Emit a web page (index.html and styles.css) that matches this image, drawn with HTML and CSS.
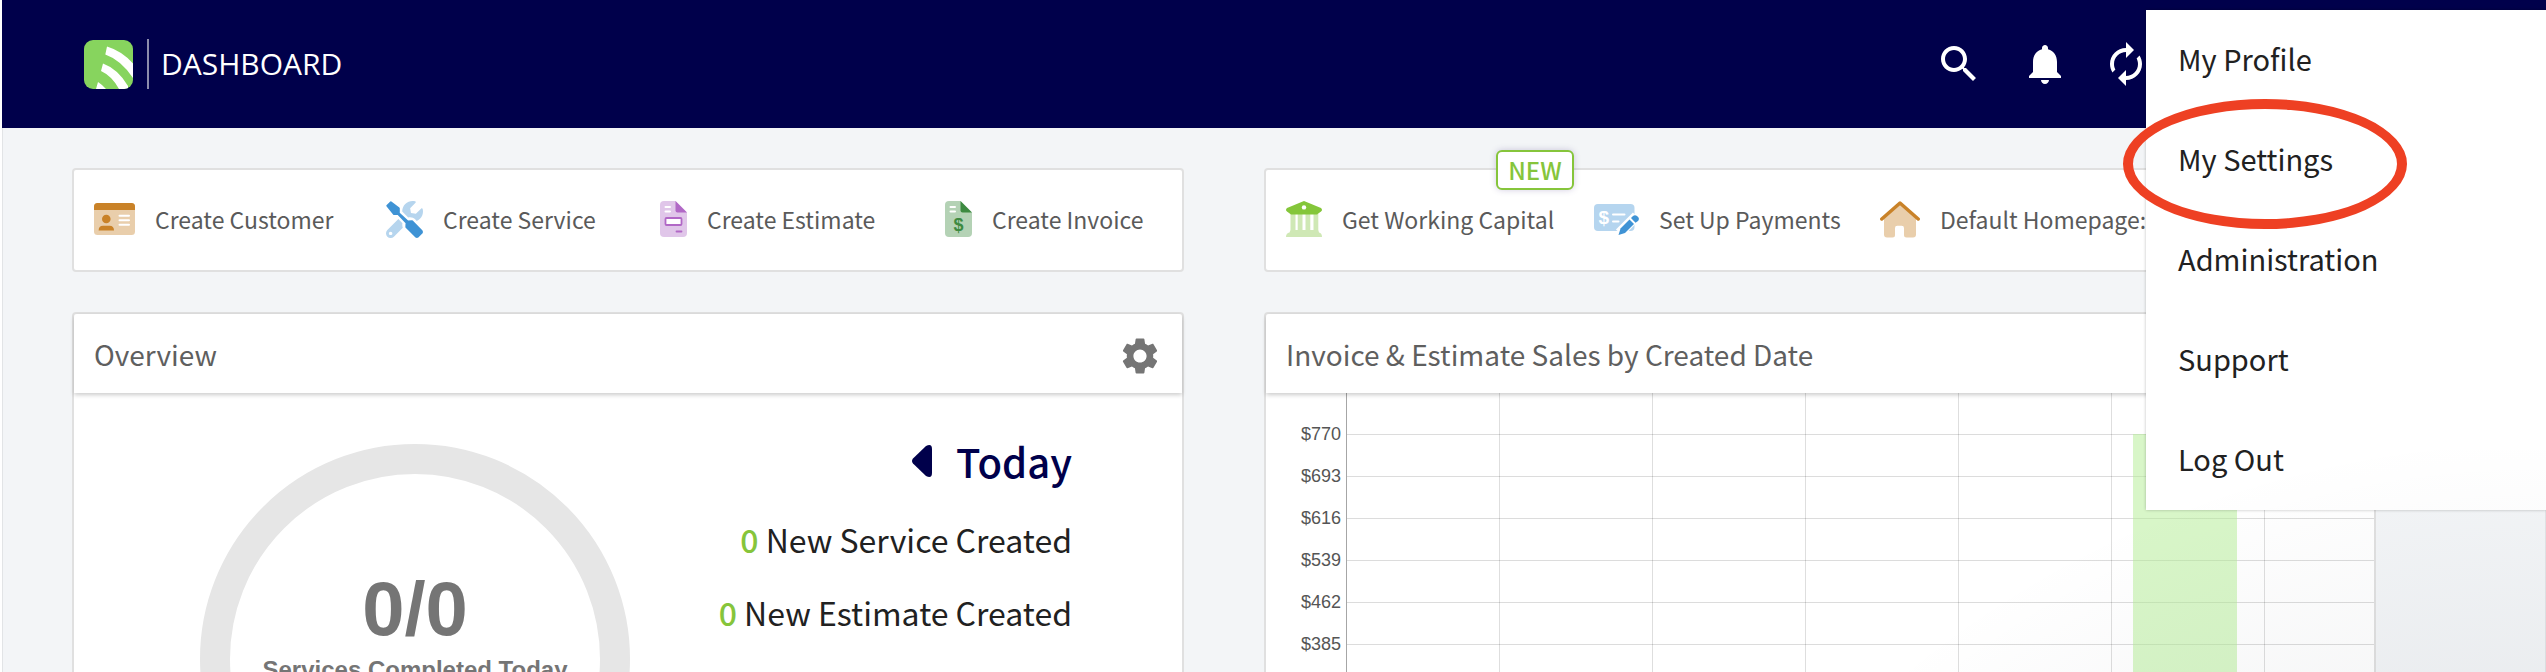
FILE: index.html
```html
<!DOCTYPE html>
<html lang="en">

<head>
  <meta charset="UTF-8">
  <meta name="viewport" content="width=device-width, initial-scale=1.0">
  <title>Dashboard</title>
  <link rel="stylesheet" href="styles.css">
</head>

<body>
  <header class="topbar">
    <a class="brand" href="#" aria-label="Home">
      <svg class="logo" viewBox="0 0 49 49">
        <defs>
          <clipPath id="logoClip"><rect width="49" height="49" rx="9" /></clipPath>
        </defs>
        <g clip-path="url(#logoClip)">
          <rect width="49" height="49" fill="#87d45e" />
          <path fill="#fff" d="M23 6.5Q38 11 49 23.5V38Q37 20 21.3 14.5zM19 23.5Q34 29 44 46V49H35Q28 36 17 31zM14 42Q18 44.500 22 49H12z" />
        </g>
      </svg>
      <h1 class="page-name">DASHBOARD</h1>
    </a>
    <div class="topbar-icons">
      <button type="button" class="icon-button" aria-label="Search">
        <svg viewBox="0 0 24 24"><path d="M15.500 14h-.79l-.28-.27C15.410 12.590 16 11.110 16 9.500 16 5.910 13.090 3 9.500 3S3 5.910 3 9.500 5.910 16 9.500 16c1.610 0 3.090-.59 4.230-1.570l.27.28v.79l5 4.990L20.490 19l-4.990-5zm-6 0C7.010 14 5 11.990 5 9.500S7.010 5 9.500 5 14 7.010 14 9.500 11.990 14 9.500 14z" /></svg>
      </button>
      <div class="topbar-status">
        <button type="button" class="icon-button" aria-label="Notifications">
          <svg viewBox="0 0 24 24"><path d="M12 22c1.100 0 2-.9 2-2h-4c0 1.100.89 2 2 2zm6-6v-5c0-3.070-1.640-5.640-4.500-6.320V4c0-.83-.67-1.500-1.500-1.500s-1.500.67-1.500 1.500v.68C7.630 5.360 6 7.920 6 11v5l-2 2v1h16v-1l-2-2z" /></svg>
        </button>
        <button type="button" class="icon-button" aria-label="Refresh">
          <svg viewBox="0 0 24 24"><path d="M12 6v3l4-4-4-4v3c-4.420 0-8 3.580-8 8 0 1.570.46 3.030 1.240 4.260L6.700 14.800c-.45-.83-.7-1.790-.7-2.800 0-3.310 2.690-6 6-6zm6.760 1.740L17.300 9.200c.44.84.7 1.790.7 2.800 0 3.310-2.690 6-6 6v-3l-4 4 4 4v-3c4.420 0 8-3.580 8-8 0-1.570-.46-3.030-1.240-4.260z" /></svg>
        </button>
      </div>
    </div>
  </header>

  <nav class="user-menu">
    <a href="#">My Profile</a>
    <a href="#" class="marked">My Settings</a>
    <a href="#">Administration</a>
    <a href="#">Support</a>
    <a href="#">Log Out</a>
  </nav>

  <main class="dashboard">
    <div class="card actions actions-create">
      <a class="action" href="#">
        <svg width="41" height="32" viewBox="0 0 41 32">
          <rect width="41" height="32" rx="3.500" fill="#e9ceab" />
          <path fill="#c98228" d="M0 7V3.500Q0 0 3.500 0h34Q41 0 41 3.500V7z" />
          <circle cx="12.300" cy="16" r="4.300" fill="#c98228" />
          <path fill="#c98228" d="M4.600 27.500Q4.600 22.700 9 22.700h6.600Q20 22.700 20 27.500z" />
          <path stroke="#fff" stroke-width="2" stroke-linecap="round" d="M25.500 12.700H35M25.500 17.300H35M25.500 21.800H35" />
        </svg>
        Create Customer
      </a>
      <a class="action" href="#">
        <svg width="37" height="37" viewBox="0 0 512 512">
          <path fill="#b6d5ee" d="M331.700 225c28.300 0 54.900 11 74.900 31l19.400 19.400c15.800-6.900 30.800-16.500 43.800-29.500 37.100-37.100 49.700-89.300 37.900-136.700-2.200-9-13.500-12.100-20.100-5.500l-74.400 74.400-67.900-11.300L334 98.900l74.400-74.400c6.600-6.600 3.400-17.900-5.700-20.200-47.400-11.700-99.600.9-136.600 37.900-28.500 28.500-41.900 66.100-41.200 103.600l82.100 82.100c8.100-1.900 16.500-2.900 24.700-2.900zm-103.900 82l-56.700-56.700L18.700 402.800c-25 25-25 65.500 0 90.500s65.500 25 90.500 0l123.600-123.600c-7.600-19.900-9.900-41.600-5-62.700zM64 472c-13.200 0-24-10.800-24-24 0-13.300 10.700-24 24-24s24 10.700 24 24c0 13.200-10.700 24-24 24z" />
          <path fill="#3f93d5" stroke="#3f93d5" stroke-width="30" stroke-linejoin="round" d="M66 20L176 102V170L300 285 360 282 492 415Q500 428 492 440L440 492Q428 500 415 492L283 360 285 300 170 180H112L20 66z" />
        </svg>
        Create Service
      </a>
      <a class="action" href="#">
        <svg width="27" height="36" viewBox="0 0 27 36">
          <path fill="#e0c6e9" d="M4 0H15.500L27 11.500V32Q27 36 23 36H4Q0 36 0 32V4Q0 0 4 0z" />
          <path fill="#b168c6" d="M15.500 0L27 11.500H17.500Q15.500 11.500 15.500 9.500z" />
          <path stroke="#fff" stroke-width="2" stroke-linecap="round" d="M5.500 6H10M5.500 10.500H10" />
          <rect x="5.500" y="17" width="16" height="7" rx="1" fill="#fff" stroke="#b168c6" stroke-width="1.800" />
          <path stroke="#b168c6" stroke-width="1.800" stroke-linecap="round" d="M16.500 30.500H21.500" />
        </svg>
        Create Estimate
      </a>
      <a class="action" href="#">
        <svg width="27" height="36" viewBox="0 0 27 36">
          <path fill="#b4d2b5" d="M4 0H15.500L27 11.500V32Q27 36 23 36H4Q0 36 0 32V4Q0 0 4 0z" />
          <path fill="#3d8a41" d="M15.500 0L27 11.500H17.500Q15.500 11.500 15.500 9.500z" />
          <path stroke="#fff" stroke-width="2" stroke-linecap="round" d="M5.500 6H10M5.500 10.500H10" />
          <text class="icon-text" x="13.500" y="30" font-size="18" fill="#3d8a41">$</text>
        </svg>
        Create Invoice
      </a>
    </div>

    <div class="card actions actions-account">
      <a class="action" href="#">
        <svg width="36" height="36" viewBox="0 0 36 36">
          <path fill="#cfe8b5" d="M4.500 13H9.500V29H11.700V13H16.500V29H19.500V13H24.300V29H27.500V13H32.300V29L33 31.500Q36 32 36 36H0Q0 32 3.500 31.500L4.500 29z" />
          <path fill="#84c63a" d="M18 0L35 7Q37 9 35 10.500L31 13.500H5L1 10.500Q-1 9 1 7z" />
          <circle cx="18" cy="6.400" r="2.200" fill="#fff" />
        </svg>
        Get Working Capital
        <span class="badge">NEW</span>
      </a>
      <a class="action" href="#">
        <svg width="45" height="31" viewBox="0 0 45 31">
          <rect width="40.500" height="27" rx="4" fill="#b5d5ef" />
          <text class="icon-text" x="9.700" y="20" font-size="19" fill="#fff">$</text>
          <path stroke="#fff" stroke-width="2" stroke-linecap="round" d="M19 10.500H30.500M19 17.500H24.500" />
          <path stroke="#fff" stroke-width="10" d="M42.500 12L25.500 29" />
          <path fill="#3f93d5" d="M24.500 31L26.500 24.500 35.500 15.500 40 20 31 29z" />
          <path fill="#3f93d5" d="M37 14L39 12Q41 10.300 43 12L44.300 13.300Q45.600 15 44 17L41.500 18.700z" />
        </svg>
        Set Up Payments
      </a>
      <a class="action" href="#">
        <svg width="40" height="37" viewBox="0 0 40 37">
          <path fill="#e9ceab" d="M20 3L36 17V33.500Q36 36.500 33 36.500H26.500Q24 36.500 24 34V27Q24 24.700 21.700 24.700H17.300Q15 24.700 15 27V34Q15 36.500 12.500 36.500H7Q4 36.500 4 33.500V17z" />
          <path fill="none" stroke="#c98228" stroke-width="3.500" stroke-linecap="round" stroke-linejoin="round" d="M1.800 18L20 2 38.200 18" />
        </svg>
        Default Homepage:
      </a>
    </div>

    <section class="card">
      <div class="card-header">
        <h2>Overview</h2>
        <button type="button" class="gear-button" aria-label="Overview settings">
          <svg viewBox="0 0 24 24"><path d="M19.140 12.940c.04-.3.060-.61.060-.94 0-.32-.020-.64-.070-.94l2.030-1.580c.18-.14.23-.41.12-.61l-1.920-3.320c-.12-.22-.37-.29-.59-.22l-2.390.96c-.5-.38-1.030-.7-1.620-.94l-.36-2.540c-.04-.24-.24-.41-.48-.41h-3.840c-.24 0-.43.17-.47.41l-.36 2.540c-.59.24-1.130.57-1.620.94l-2.390-.96c-.22-.08-.47 0-.59.22L2.740 8.870c-.12.21-.08.47.12.61l2.030 1.580c-.05.3-.09.63-.09.94s.020.64.070.94l-2.030 1.580c-.18.14-.23.41-.12.61l1.920 3.320c.12.22.37.29.59.22l2.390-.96c.5.38 1.030.7 1.620.94l.36 2.540c.05.24.24.41.48.41h3.840c.24 0 .44-.17.47-.41l.36-2.540c.59-.24 1.130-.56 1.620-.94l2.390.96c.22.08.47 0 .59-.22l1.920-3.320c.12-.22.070-.47-.12-.61l-2.010-1.580zM12 15.600c-1.980 0-3.600-1.620-3.600-3.600s1.620-3.600 3.600-3.600 3.600 1.620 3.600 3.600-1.620 3.600-3.600 3.600z" /></svg>
        </button>
      </div>
      <div class="overview">
        <div class="donut">
          <strong class="donut-value">0/0</strong>
          <span class="donut-label">Services Completed Today</span>
        </div>
        <div class="summary">
          <div class="summary-day">
            <button type="button" class="prev-day" aria-label="Previous day">
              <svg viewBox="0 0 20 32"><path d="M1 13.500L14 1Q20-2 20 4V28Q20 34 14 31L1 18.500Q-1 16 1 13.500z" /></svg>
            </button>
            <h3>Today</h3>
          </div>
          <p><span class="count">0</span> New Service Created</p>
          <p><span class="count">0</span> New Estimate Created</p>
        </div>
      </div>
    </section>

    <section class="card">
      <div class="card-header">
        <h2>Invoice &amp; Estimate Sales by Created Date</h2>
      </div>
      <div class="chart">
        <div class="chart-labels">
          <span>$770</span>
          <span>$693</span>
          <span>$616</span>
          <span>$539</span>
          <span>$462</span>
          <span>$385</span>
        </div>
        <div class="chart-plot">
          <div class="chart-col"></div>
          <div class="chart-col"></div>
          <div class="chart-col"></div>
          <div class="chart-col"></div>
          <div class="chart-col"></div>
          <div class="chart-col"><div class="bar"></div></div>
          <div class="chart-col"></div>
        </div>
      </div>
    </section>
  </main>

  <div class="corner-shade"></div>
</body>

</html>
```

FILE: styles.css
```css
*,
*::after {
  box-sizing: border-box;
}

body {
  margin: 0;
  padding-left: 2px;
  height: 100vh;
  overflow: hidden;
  position: relative;
  display: flex;
  flex-direction: column;
  font-family: "Noto Sans CJK SC", "Noto Sans", sans-serif;
  font-size: 23px;
  color: #212121;
  background-color: #fff;
}

h1,
h2,
h3,
p {
  margin: 0;
  font-weight: 400;
}

a {
  color: inherit;
  text-decoration: none;
}

button {
  display: block;
  padding: 0;
  border: none;
  background: none;
  cursor: pointer;
}

svg {
  display: block;
  flex: none;
}

.topbar {
  flex: none;
  height: 128px;
  padding: 0 396px 0 82px;
  display: flex;
  justify-content: space-between;
  align-items: center;
  background-color: #00004b;
  color: #fff;
}

.brand {
  display: flex;
  align-items: center;
  gap: 14px;
}

.logo {
  width: 49px;
  height: 49px;
}

.page-name {
  padding-left: 12px;
  border-left: 2px solid #8c8cac;
  font-family: "Open Sans", sans-serif;
  font-size: 30px;
  line-height: 50px;
}

.topbar-icons {
  display: flex;
  gap: 38px;
}

.topbar-status {
  display: flex;
  gap: 33px;
}

.icon-button svg {
  width: 48px;
  height: 48px;
  fill: #fff;
}

.user-menu {
  position: absolute;
  top: 10px;
  right: 0;
  z-index: 5;
  width: 400px;
  background-color: #fff;
  box-shadow: 0 0 3px rgba(0, 0, 0, 0.25);
}

.user-menu a {
  display: block;
  position: relative;
  height: 100px;
  padding: 0 32px;
  font-size: 29px;
  line-height: 96px;
}

.marked::after {
  content: "";
  position: absolute;
  top: -11px;
  left: -23px;
  width: 284px;
  height: 130px;
  border: 10px solid #ee4023;
  border-radius: 50%;
}

.dashboard {
  flex: 1;
  min-height: 0;
  overflow: hidden;
  padding: 40px 169px 0 69px;
  display: grid;
  grid-template-columns: 1fr 1fr;
  grid-template-rows: 104px auto;
  gap: 40px 80px;
  background-color: #f3f5f7;
  border-left: 1px solid #e2e4e6;
  border-right: 1px solid #e2e4e6;
}

.card {
  min-width: 0;
  background-color: #fff;
  border: 2px solid #e0e0e0;
  border-radius: 4px;
}

.actions {
  display: grid;
  align-items: center;
  padding: 0 20px;
}

.actions-create {
  grid-template-columns: 292fr 274fr 285fr 217fr;
}

.actions-account {
  grid-template-columns: 308fr 286fr 474fr;
}

.action {
  position: relative;
  display: flex;
  align-items: center;
  gap: 20px;
  padding-bottom: 2px;
  line-height: 36px;
  color: #5a5a5a;
  white-space: nowrap;
}

.icon-text {
  font-family: "Liberation Sans", Arial, sans-serif;
  font-weight: 700;
  text-anchor: middle;
}

.badge {
  position: absolute;
  top: -51px;
  left: 210px;
  width: 78px;
  border: 2px solid #86c53b;
  border-radius: 6px;
  background-color: #fff;
  box-shadow: 0 0 6px rgba(80, 60, 140, 0.25);
  color: #86c53b;
  font-size: 24px;
  font-weight: 500;
  line-height: 36px;
  text-align: center;
}

.card-header {
  position: relative;
  z-index: 1;
  height: 79px;
  padding: 4px 20px 0;
  display: flex;
  justify-content: space-between;
  align-items: center;
  background-color: #fff;
  border-radius: 4px 4px 0 0;
  box-shadow: 0 2px 4px rgba(0, 0, 0, 0.2);
}

.card-header h2 {
  padding-bottom: 4px;
  font-size: 28px;
  line-height: 40px;
  color: #5f5f5f;
}

.gear-button svg {
  width: 44px;
  height: 44px;
  fill: #757575;
}

.overview {
  display: flex;
  justify-content: space-between;
  align-items: flex-start;
  padding: 40px 110px 40px 126px;
}

.donut {
  width: 430px;
  height: 430px;
  margin-top: 11px;
  padding-top: 90px;
  border: 30px solid #e6e6e6;
  border-radius: 50%;
  text-align: center;
  color: #757575;
  font-family: "Liberation Sans", Arial, sans-serif;
  font-weight: 700;
}

.donut-value {
  display: block;
  font-size: 76px;
  line-height: 90px;
}

.donut-label {
  font-size: 24px;
  line-height: 32px;
}

.summary {
  text-align: right;
}

.summary p {
  font-size: 32px;
  line-height: 73px;
}

.summary-day {
  display: flex;
  justify-content: flex-end;
  align-items: center;
  gap: 24px;
  margin-bottom: 14px;
  color: #00004b;
}

.summary-day h3 {
  font-size: 40px;
  font-weight: 500;
  line-height: 56px;
}

.prev-day svg {
  width: 20px;
  height: 32px;
  fill: #00004b;
}

.summary .count {
  color: #86c53b;
  font-weight: 500;
}

.chart {
  display: flex;
  height: 416px;
  overflow: hidden;
}

.chart-labels {
  width: 80px;
  padding: 20px 5px 0 0;
  display: flex;
  flex-direction: column;
  font-family: "Liberation Sans", Arial, sans-serif;
  font-size: 18px;
  line-height: 42px;
  color: #555;
  text-align: right;
}

.chart-plot {
  flex: 1;
  min-width: 0;
  display: flex;
  overflow: hidden;
  border-left: 1px solid #a6a6a6;
  background: linear-gradient(#dcdcdc 1px, transparent 1px) 0 41px / 100% 42px;
}

.chart-col {
  flex: none;
  width: 153px;
  padding: 41px 27px 0 21px;
  border-right: 1px solid rgba(0, 0, 0, 0.13);
}

.bar {
  height: 100%;
  background-color: rgba(178, 238, 146, 0.5);
}

/* soft shade coming from the bottom right corner */
.corner-shade {
  position: absolute;
  top: 450px;
  right: 0;
  z-index: 6;
  width: 1000px;
  height: 1000px;
  background: radial-gradient(ellipse at bottom right, rgba(29, 39, 54, 0.16) 0, rgba(29, 39, 54, 0) 72%);
  pointer-events: none;
}
```
